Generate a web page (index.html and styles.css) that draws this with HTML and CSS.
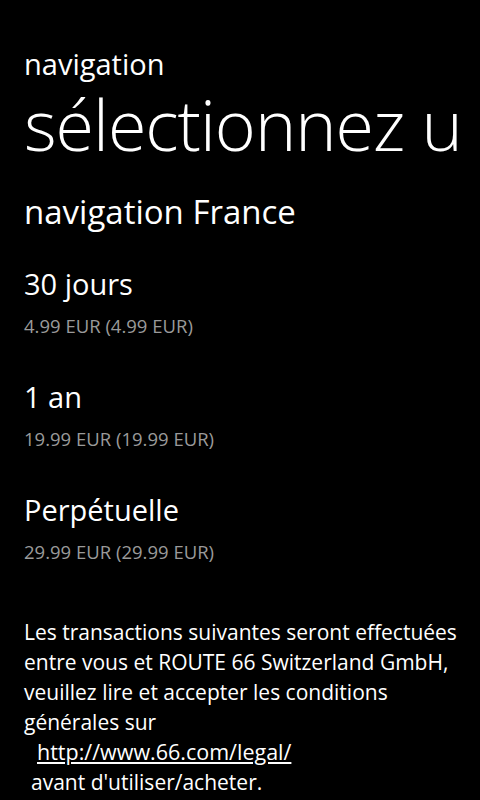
FILE: index.html
```html
<!DOCTYPE html>
<html lang="fr">

<head>
    <meta charset="UTF-8">
    <meta name="viewport" content="width=device-width, initial-scale=1.0">
    <title>navigation</title>
    <link rel="stylesheet" href="styles.css">
</head>

<body>
    <header class="page-header">
        <div class="app-title">navigation</div>
        <h1 class="page-title">sélectionnez un produit</h1>
    </header>

    <main class="content">
        <h2 class="product-name">navigation France</h2>

        <ul class="offers">
            <li class="offer">
                <div class="offer-name">30 jours</div>
                <div class="offer-price">4.99 EUR (4.99 EUR)</div>
            </li>
            <li class="offer">
                <div class="offer-name">1 an</div>
                <div class="offer-price">19.99 EUR (19.99 EUR)</div>
            </li>
            <li class="offer">
                <div class="offer-name">Perpétuelle</div>
                <div class="offer-price">29.99 EUR (29.99 EUR)</div>
            </li>
        </ul>

        <p class="legal">
            Les transactions suivantes seront effectuées entre vous et ROUTE 66 Switzerland GmbH, veuillez lire et accepter les conditions générales sur
            <span class="legal-link"><a href="#">http://www.66.com/legal/</a></span>
            <span class="legal-end">avant d'utiliser/acheter.</span>
        </p>
    </main>
</body>

</html>
```

FILE: styles.css
```css
* {
    margin: 0;
    padding: 0;
    box-sizing: border-box;
}

:root {
    --bg-color: #000;
    --text-color: #fff;
    --sub-color: #9a9a9a;
}

html,
body {
    height: 100%;
}

body {
    background-color: var(--bg-color);
    color: var(--text-color);
    font-family: "Open Sans", "Noto Sans", sans-serif;
    overflow: hidden;
}

.page-header {
    padding: 44px 0 0 24px;
}

.app-title {
    font-size: 29px;
    line-height: 40px;
}

/* title is clipped like the phone's page title */
.page-title {
    width: 442px;
    overflow: hidden;
    font-weight: 300;
    font-size: 70px;
    line-height: 80px;
    white-space: nowrap;
    letter-spacing: -1px;
}

.content {
    padding: 26px 16px 0 24px;
}

.product-name {
    font-weight: 400;
    font-size: 33px;
    line-height: 44px;
}

.offers {
    list-style: none;
    margin-top: 30px;
}

.offer {
    height: 113px;
}

.offer-name {
    font-size: 29px;
    line-height: 40px;
}

.offer-price {
    color: var(--sub-color);
    font-size: 18.5px;
    line-height: 44px;
}

.legal {
    margin-top: 14px;
    font-size: 21px;
    line-height: 30px;
}

.legal-link {
    display: block;
    padding-left: 13px;
    font-size: 21.5px;
}

.legal-link a {
    color: var(--text-color);
}

.legal-end {
    display: block;
    padding-left: 7px;
}
```
